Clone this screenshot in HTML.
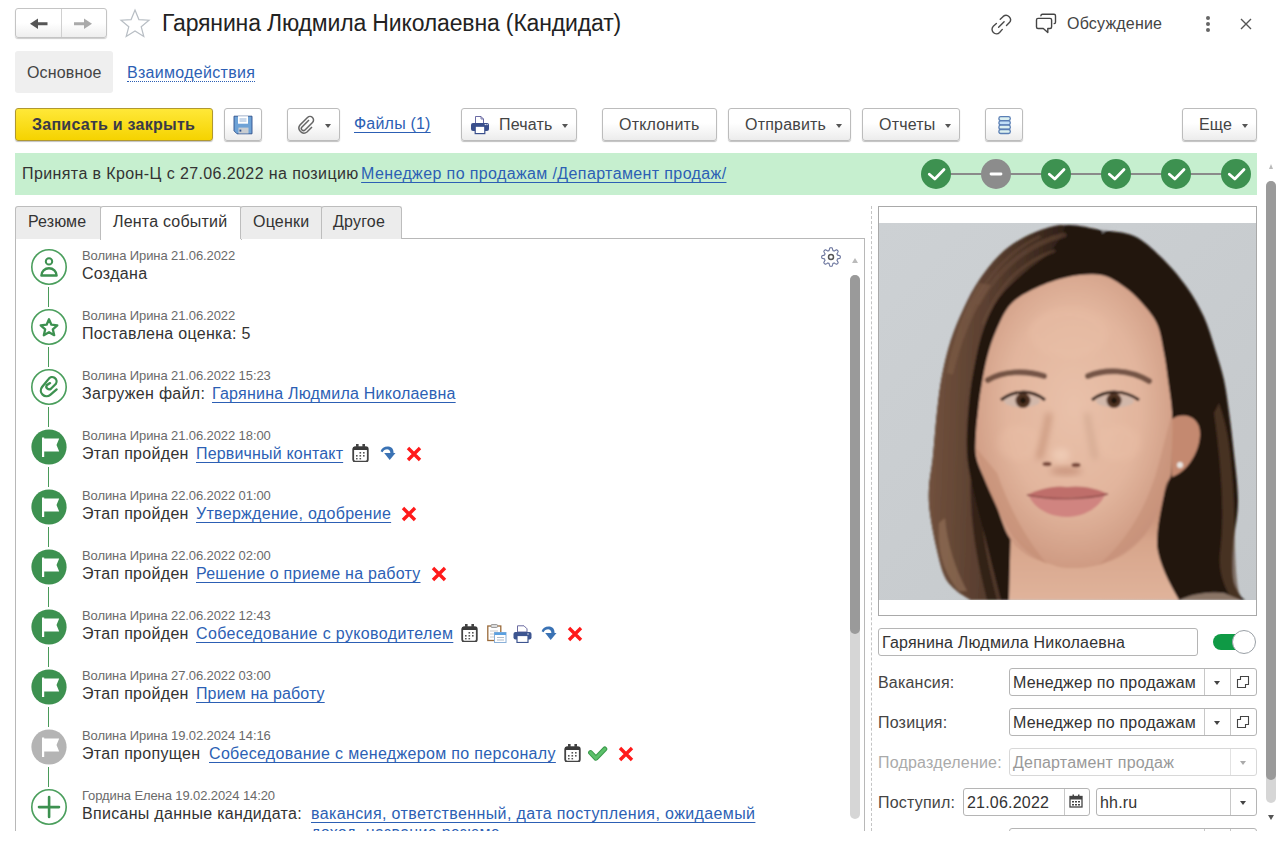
<!DOCTYPE html>
<html><head><meta charset="utf-8">
<style>
html,body{margin:0;padding:0}
body{width:1280px;height:842px;overflow:hidden;background:#fff;font-family:"Liberation Sans",sans-serif;color:#333;position:relative}
.a{position:absolute;white-space:nowrap;line-height:1}
.t16{font-size:16px;letter-spacing:0.2px}
.btn{position:absolute;top:108px;height:31px;border:1px solid #bcbcbc;border-radius:3px;background:linear-gradient(#fff 0%,#fff 45%,#ececec 100%);box-shadow:0 1px 1px rgba(0,0,0,.25);box-sizing:content-box}
.btxt{position:absolute;top:116.5px;font-size:16px;line-height:1;color:#444;white-space:nowrap;letter-spacing:0.2px}
.dd{position:absolute;width:0;height:0;border-left:3.5px solid transparent;border-right:3.5px solid transparent;border-top:4px solid #555}
.small{font-size:13px;color:#6a6a6a;letter-spacing:-0.1px}
.main{font-size:16px;color:#333;letter-spacing:0.3px}
.vline{position:absolute;left:47.7px;width:1.4px;background:#4a9a5a}
.lnk,.main.lnk{color:#2c5fb4;text-decoration:underline;text-underline-offset:3px;text-decoration-skip-ink:none}
.fld{position:absolute;height:26px;border:1px solid #b5b5b5;border-radius:3px;background:#fff;box-sizing:content-box}
</style></head><body>

<!-- header nav -->
<div class="a" style="left:15px;top:8px;width:90px;height:28px;border:1px solid #c4c4c4;border-radius:3px;background:linear-gradient(#fff 50%,#eee);box-shadow:0 1px 1px rgba(0,0,0,.2)"></div>
<div class="a" style="left:61px;top:9px;width:1px;height:28px;background:#d0d0d0"></div>
<svg class="a" style="left:28px;top:14px" width="22" height="18" viewBox="0 0 22 18"><path d="M8 9.75h11.5" stroke="#555" stroke-width="3"/><path d="M2 9.75L10 4.5V15z" fill="#555"/></svg>
<svg class="a" style="left:72px;top:14px" width="22" height="18" viewBox="0 0 22 18"><path d="M2 9.75h11.5" stroke="#aaa" stroke-width="3"/><path d="M20 9.75L12 4.5V15z" fill="#aaa"/></svg>
<svg class="a" style="left:119px;top:8px" width="32" height="30" viewBox="0 0 32 30"><path d="M16 2l3.9 9.6 10.1.6-7.8 6.5 2.6 9.8L16 23l-8.8 5.5 2.6-9.8L2 12.2l10.1-.6z" fill="none" stroke="#b8bec4" stroke-width="1.2"/></svg>
<div class="a" style="left:162px;top:12px;font-size:23px;color:#222;letter-spacing:-0.15px">Гарянина Людмила Николаевна (Кандидат)</div>

<!-- header right -->
<svg class="a" style="left:990px;top:13px" width="24" height="22" viewBox="0 0 24 22"><g fill="none" stroke="#4a4a4a" stroke-width="1.4" stroke-linecap="round"><path d="M10.25 6.28L13.2 3.4A4.4 4.4 0 0 1 19.4 9.6L16.5 12.5"/><path d="M6.4 10.4L3.3 13.2A4.4 4.4 0 0 0 9.6 19.4L12.3 16.4"/><path d="M8.6 14.2L14.1 8.7"/></g></svg>
<svg class="a" style="left:1034px;top:12px" width="24" height="24" viewBox="0 0 24 24"><g fill="none" stroke="#444" stroke-width="1.4" stroke-linejoin="round" stroke-linecap="round"><path d="M6.9 3.8Q7 2.2 8.5 2.2H20Q21.5 2.2 21.5 3.7V10.3Q21.5 11.5 20.2 11.6"/><path d="M2.5 7.9Q2.5 6.4 4 6.4H16Q17.6 6.4 17.6 8V15Q17.6 16.5 16 16.5H13.8V20.6L9.3 16.5H4Q2.5 16.5 2.5 15Z"/></g></svg>
<div class="a t16" style="left:1067px;top:16px;color:#444">Обсуждение</div>
<div class="a" style="left:1206px;top:16px;width:4px;height:4px;border-radius:2px;background:#666"></div>
<div class="a" style="left:1206px;top:22px;width:4px;height:4px;border-radius:2px;background:#666"></div>
<div class="a" style="left:1206px;top:28px;width:4px;height:4px;border-radius:2px;background:#666"></div>
<svg class="a" style="left:1240px;top:18px" width="12" height="12" viewBox="0 0 12 12"><path d="M1 1l10 10M11 1L1 11" stroke="#555" stroke-width="1.4"/></svg>

<!-- section tabs -->
<div class="a" style="left:15px;top:51px;width:98px;height:42px;background:#efefef;border-radius:3px"></div>
<div class="a t16" style="left:27px;top:64.5px;color:#444;letter-spacing:0.15px">Основное</div>
<div class="a t16" style="left:127px;top:64.5px;color:#2c5fb4;border-bottom:1px dotted #2c5fb4;padding-bottom:0px;letter-spacing:0.3px">Взаимодействия</div>

<!-- toolbar -->
<div class="a" style="left:15px;top:108px;width:196px;height:31px;border:1px solid #b09830;border-radius:3px;background:linear-gradient(#ffe838,#f5d300);box-shadow:0 1px 1px rgba(0,0,0,.25)"></div>
<div class="a" style="left:32px;top:116.5px;font-size:16px;font-weight:bold;color:#3a3a48;letter-spacing:0.25px">Записать и закрыть</div>

<div class="btn" style="left:224px;width:36px"></div>
<svg class="a" style="left:233px;top:115px" width="20" height="20" viewBox="0 0 20 20"><path d="M1 1.2H19V18.8H4L1 15.8Z" fill="#6ea2d6" stroke="#2d4f8a" stroke-width="0.9"/><rect x="5" y="1.2" width="10" height="7.5" fill="#fff"/><path d="M6.5 4h7M6.5 6h7" stroke="#7aa0cc" stroke-width="0.8"/><rect x="5.5" y="12.6" width="10" height="5.8" fill="#c9cdd1"/><rect x="6.5" y="14.6" width="1.8" height="2" fill="#2d4f8a"/></svg>

<div class="btn" style="left:287px;width:51px"></div>
<svg class="a" style="left:296px;top:115px" width="20" height="20" viewBox="0 0 20 20"><path d="M13 5l-7 7a2 2 0 0 0 3 3l7.5-7.5a3.5 3.5 0 0 0-5-5L4 10a5 5 0 0 0 7 7l5-5" fill="none" stroke="#666" stroke-width="1.5"/></svg>
<div class="dd" style="left:325px;top:124px"></div>

<div class="a t16 lnk" style="left:354px;top:116px">Файлы (1)</div>

<div class="btn" style="left:461px;width:114px"></div>
<svg class="a" style="left:469px;top:114px" width="22" height="22" viewBox="0 0 22 22"><path d="M6.5 2.5H12L14.5 5V10H6.5Z" fill="#fff" stroke="#5a5a9a" stroke-width="0.9"/><path d="M12 2.5V5H14.5" fill="none" stroke="#5a5a9a" stroke-width="0.8"/><rect x="2" y="9" width="18" height="8" rx="2" fill="#3a4f8c"/><rect x="6.2" y="12.2" width="9.6" height="7.4" fill="#fff" stroke="#3a4f8c" stroke-width="1.2"/><circle cx="16.3" cy="10.6" r="0.7" fill="#fff"/><circle cx="18.1" cy="10.6" r="0.7" fill="#fff"/></svg>
<div class="btxt" style="left:499px">Печать</div>
<div class="dd" style="left:562px;top:124px"></div>

<div class="btn" style="left:602px;width:113px"></div>
<div class="btxt" style="left:619px">Отклонить</div>

<div class="btn" style="left:728px;width:121px"></div>
<div class="btxt" style="left:745px">Отправить</div>
<div class="dd" style="left:836px;top:124px"></div>

<div class="btn" style="left:862px;width:96px"></div>
<div class="btxt" style="left:879px">Отчеты</div>
<div class="dd" style="left:945px;top:124px"></div>

<div class="btn" style="left:985px;width:36px"></div>
<svg class="a" style="left:997px;top:114px" width="16" height="22" viewBox="0 0 16 22"><g stroke="#5a7fb5" stroke-width="1.3"><rect x="1.9" y="2.6" width="11.4" height="4" rx="1.8" fill="#dcf0f0"/><rect x="1.9" y="6.9" width="11.4" height="4" rx="1.8" fill="#c2e0f8"/><rect x="1.9" y="11.2" width="11.4" height="4" rx="1.8" fill="#dcf0f0"/><rect x="1.9" y="15.5" width="11.4" height="4" rx="1.8" fill="#dcf0f0"/></g></svg>

<div class="btn" style="left:1182px;width:73px"></div>
<div class="btxt" style="left:1199px">Еще</div>
<div class="dd" style="left:1242px;top:124px"></div>

<!-- banner -->
<div class="a" style="left:15px;top:153px;width:1242px;height:42px;background:#c6efcf"></div>
<div class="a t16" style="left:22px;top:165.5px;color:#333;letter-spacing:0.4px">Принята в Крон-Ц с 27.06.2022 на позицию <span class="lnk" style="margin-left:-2.5px;letter-spacing:0.38px">Менеджер по продажам /Департамент продаж/</span></div>
<div class="a" style="left:936px;top:173px;width:300px;height:2px;background:#8a8a8a"></div>
<svg class="a" style="left:919px;top:157px" width="340" height="34" viewBox="0 0 340 34">
<g fill="#3d9150"><circle cx="17" cy="17" r="15"/><circle cx="137" cy="17" r="15"/><circle cx="197" cy="17" r="15"/><circle cx="257" cy="17" r="15"/><circle cx="317" cy="17" r="15"/></g>
<circle cx="77" cy="17" r="15" fill="#8c8c8c"/>
<g fill="none" stroke="#fff" stroke-width="2.8" stroke-linecap="round" stroke-linejoin="round"><path d="M10.3 17.2L15.8 22L25 12.5"/><path d="M130.3 17.2L135.8 22L145 12.5"/><path d="M190.3 17.2L195.8 22L205 12.5"/><path d="M250.3 17.2L255.8 22L265 12.5"/><path d="M310.3 17.2L315.8 22L325 12.5"/><path d="M72 17h10"/></g>
</svg>

<!-- page scrollbar -->
<div class="a" style="left:1266px;top:181px;width:10px;height:622px;border-radius:5px;background:#d6d6d6"></div>
<div class="a" style="left:1266px;top:181px;width:10px;height:599px;border-radius:5px;background:#9a9a9a"></div>
<div class="a" style="left:1268.5px;top:164px;width:0;height:0;border-left:2.5px solid transparent;border-right:2.5px solid transparent;border-bottom:5px solid #bbb"></div>
<div class="a" style="left:1268px;top:815px;width:0;height:0;border-left:3px solid transparent;border-right:3px solid transparent;border-top:5px solid #555"></div>

<!-- tabs -->
<div class="a" style="left:15px;top:238px;width:848px;height:600px;border-left:1px solid #b8b8b8;border-top:1px solid #b8b8b8;border-right:1px solid #b8b8b8"></div>
<div class="a" style="left:15px;top:206px;width:85px;height:32px;background:#ececec;border:1px solid #bdbdbd;border-bottom:none;border-radius:3px 3px 0 0"></div>
<div class="a" style="left:100px;top:206px;width:140px;height:33px;background:#fff;border:1px solid #bdbdbd;border-bottom:none;border-radius:3px 3px 0 0"></div>
<div class="a" style="left:240px;top:206px;width:81px;height:32px;background:#ececec;border:1px solid #bdbdbd;border-bottom:none;border-radius:3px 3px 0 0"></div>
<div class="a" style="left:321px;top:206px;width:79px;height:32px;background:#ececec;border:1px solid #bdbdbd;border-bottom:none;border-radius:3px 3px 0 0"></div>
<div class="a t16" style="left:28px;top:213.5px;color:#333;letter-spacing:0.1px">Резюме</div>
<div class="a t16" style="left:113px;top:213.5px;color:#333">Лента событий</div>
<div class="a t16" style="left:253px;top:213.5px;color:#333">Оценки</div>
<div class="a t16" style="left:333px;top:213.5px;color:#333">Другое</div>

<!-- gear + left scrollbar -->
<svg class="a" style="left:820px;top:246px" width="22" height="22" viewBox="0 0 22 22"><path d="M20.30 11.00 L20.29 11.32 L20.28 11.65 L20.17 11.96 L19.71 12.22 L19.19 12.44 L18.64 12.62 L18.10 12.77 L17.61 12.90 L17.37 13.07 L17.30 13.29 L17.21 13.51 L17.12 13.73 L17.02 13.94 L16.92 14.15 L17.14 14.54 L17.41 15.01 L17.68 15.51 L17.93 16.03 L18.11 16.55 L18.12 16.98 L17.91 17.22 L17.69 17.46 L17.46 17.69 L17.22 17.91 L16.98 18.12 L16.55 18.11 L16.03 17.93 L15.51 17.68 L15.01 17.41 L14.55 17.14 L14.15 16.92 L13.94 17.02 L13.73 17.12 L13.51 17.21 L13.29 17.30 L13.07 17.37 L12.90 17.61 L12.77 18.10 L12.62 18.64 L12.44 19.19 L12.22 19.71 L11.96 20.17 L11.65 20.28 L11.32 20.29 L11.00 20.30 L10.68 20.29 L10.35 20.28 L10.04 20.17 L9.78 19.71 L9.56 19.19 L9.38 18.64 L9.23 18.10 L9.10 17.61 L8.93 17.37 L8.71 17.30 L8.49 17.21 L8.27 17.12 L8.06 17.02 L7.85 16.92 L7.46 17.14 L6.99 17.41 L6.49 17.68 L5.97 17.93 L5.45 18.11 L5.02 18.12 L4.78 17.91 L4.54 17.69 L4.31 17.46 L4.09 17.22 L3.88 16.98 L3.89 16.55 L4.07 16.03 L4.32 15.51 L4.59 15.01 L4.86 14.54 L5.08 14.15 L4.98 13.94 L4.88 13.73 L4.79 13.51 L4.70 13.29 L4.63 13.07 L4.39 12.90 L3.90 12.77 L3.36 12.62 L2.81 12.44 L2.29 12.22 L1.83 11.96 L1.72 11.65 L1.71 11.32 L1.70 11.00 L1.71 10.68 L1.72 10.35 L1.83 10.04 L2.29 9.78 L2.81 9.56 L3.36 9.38 L3.90 9.23 L4.39 9.10 L4.63 8.93 L4.70 8.71 L4.79 8.49 L4.88 8.27 L4.98 8.06 L5.08 7.85 L4.86 7.45 L4.59 6.99 L4.32 6.49 L4.07 5.97 L3.89 5.45 L3.88 5.02 L4.09 4.78 L4.31 4.54 L4.54 4.31 L4.78 4.09 L5.02 3.88 L5.45 3.89 L5.97 4.07 L6.49 4.32 L6.99 4.59 L7.45 4.86 L7.85 5.08 L8.06 4.98 L8.27 4.88 L8.49 4.79 L8.71 4.70 L8.93 4.63 L9.10 4.39 L9.23 3.90 L9.38 3.36 L9.56 2.81 L9.78 2.29 L10.04 1.83 L10.35 1.72 L10.68 1.71 L11.00 1.70 L11.32 1.71 L11.65 1.72 L11.96 1.83 L12.22 2.29 L12.44 2.81 L12.62 3.36 L12.77 3.90 L12.90 4.39 L13.07 4.63 L13.29 4.70 L13.51 4.79 L13.73 4.88 L13.94 4.98 L14.15 5.08 L14.55 4.86 L15.01 4.59 L15.51 4.32 L16.03 4.07 L16.55 3.89 L16.98 3.88 L17.22 4.09 L17.46 4.31 L17.69 4.54 L17.91 4.78 L18.12 5.02 L18.11 5.45 L17.93 5.97 L17.68 6.49 L17.41 6.99 L17.14 7.45 L16.92 7.85 L17.02 8.06 L17.12 8.27 L17.21 8.49 L17.30 8.71 L17.37 8.93 L17.61 9.10 L18.10 9.23 L18.64 9.38 L19.19 9.56 L19.71 9.78 L20.17 10.04 L20.28 10.35 L20.29 10.68Z" fill="none" stroke="#66709a" stroke-width="1.1" stroke-linejoin="round"/><circle cx="11" cy="11" r="2.5" fill="none" stroke="#555" stroke-width="1.5"/></svg>
<div class="a" style="left:852px;top:258px;width:0;height:0;border-left:3px solid transparent;border-right:3px solid transparent;border-bottom:5px solid #bbb"></div>
<div class="a" style="left:850px;top:275px;width:10px;height:544px;border-radius:5px;background:#d6d6d6"></div>
<div class="a" style="left:850px;top:275px;width:10px;height:359px;border-radius:5px;background:#9a9a9a"></div>

<!-- dashed splitter -->
<div class="a" style="left:871px;top:206px;width:0;height:625px;border-left:1px dashed #c4c4c4"></div>

<!-- TIMELINE -->
<div class="vline" style="top:287px;height:20px"></div>
<svg class="a" style="left:30px;top:248px" width="38" height="38" viewBox="0 0 38 38"><circle cx="19" cy="19" r="17.2" fill="none" stroke="#4a9e5c" stroke-width="1.6"/><circle cx="19" cy="13.4" r="3.2" fill="none" stroke="#3d9150" stroke-width="2"/><path d="M11.4 27.5a7.6 7.3 0 0 1 15.2 0z" fill="none" stroke="#3d9150" stroke-width="2.4" stroke-linejoin="round"/></svg>
<div class="a small" style="left:82px;top:248.5px">Волина Ирина 21.06.2022</div>
<div class="a main" style="left:82px;top:265.5px">Создана</div>
<div class="vline" style="top:347px;height:20px"></div>
<svg class="a" style="left:30px;top:308px" width="38" height="38" viewBox="0 0 38 38"><circle cx="19" cy="19" r="17.2" fill="none" stroke="#4a9e5c" stroke-width="1.6"/><path d="M19 11.2l2.4 5.5 5.9.6-4.5 4 1.4 5.9L19 24.2l-5.2 3 1.4-5.9-4.5-4 5.9-.6z" fill="none" stroke="#3d9150" stroke-width="2.3" stroke-linejoin="round"/></svg>
<div class="a small" style="left:82px;top:308.5px">Волина Ирина 21.06.2022</div>
<div class="a main" style="left:82px;top:325.5px">Поставлена оценка: 5</div>
<div class="vline" style="top:407px;height:20px"></div>
<svg class="a" style="left:30px;top:368px" width="38" height="38" viewBox="0 0 38 38"><circle cx="19" cy="19" r="17.2" fill="none" stroke="#4a9e5c" stroke-width="1.6"/><path d="M26.65 21.45L20.25 26.8A5.7 5.7 0 0 1 12.05 18.96L18.46 11.12A3.9 3.9 0 0 1 25.9 15.75L20.96 20.74A2.85 2.85 0 0 1 16.68 17.18L20.07 15.1" fill="none" stroke="#3d9150" stroke-width="2.3" stroke-linecap="round"/></svg>
<div class="a small" style="left:82px;top:368.5px">Волина Ирина 21.06.2022 15:23</div>
<div class="a main" style="left:82px;top:385.5px">Загружен файл:</div>
<div class="a main lnk" style="left:212px;top:385.5px;letter-spacing:0.22px">Гарянина Людмила Николаевна</div>
<div class="vline" style="top:467px;height:20px"></div>
<svg class="a" style="left:31px;top:429px" width="36" height="36" viewBox="0 0 36 36"><circle cx="18" cy="18" r="17.6" fill="#3d9150"/><path d="M11 8.6h2.2v1h15l-2.7 6.5 2.7 6.5H13.2V28h-2.2z" fill="#fff"/></svg>
<div class="a small" style="left:82px;top:428.5px">Волина Ирина 21.06.2022 18:00</div>
<div class="a main" style="left:82px;top:445.5px">Этап пройден</div>
<div class="a main lnk" style="left:196px;top:445.5px;letter-spacing:0.17px">Первичный контакт</div>
<svg class="a" style="left:352px;top:443px" width="17" height="19" viewBox="0 0 17 19"><rect x="1.2" y="4.2" width="14.6" height="14.4" rx="2" fill="#fff" stroke="#444" stroke-width="1.8"/><rect x="1" y="4" width="15" height="3" fill="#3a3a3a"/><rect x="4" y="1" width="2.6" height="3.2" fill="#444"/><rect x="10.4" y="1" width="2.6" height="3.2" fill="#444"/><g fill="#555"><rect x="4" y="12" width="1.6" height="1.6"/><rect x="7.5" y="9" width="1.6" height="1.6"/><rect x="7.5" y="12" width="1.6" height="1.6"/><rect x="7.5" y="15" width="1.6" height="1.4"/><rect x="11" y="9" width="1.6" height="1.6"/><rect x="11" y="12" width="1.6" height="1.6"/><rect x="4" y="15" width="1.6" height="1.4"/></g></svg>
<svg class="a" style="left:380px;top:446px" width="17" height="15" viewBox="0 0 17 15"><path d="M0.6 5.2C1.5 2 5 0.2 8.5 0.6C12 1 13.6 3.5 13.6 7.2L10.4 7.2C10.3 5 9.5 3.6 7.8 3.4C5.5 3.1 3.5 4.5 2.6 6.2Z" fill="#3a72b4"/><path d="M4.2 6.9h11.3l-5.8 7z" fill="#3a72b4"/></svg>
<svg class="a" style="left:406px;top:446px" width="16" height="16" viewBox="0 0 16 16"><path d="M2 2l12 12M14 2L2 14" stroke="#ff1a1a" stroke-width="3.4"/></svg>
<div class="vline" style="top:527px;height:20px"></div>
<svg class="a" style="left:31px;top:489px" width="36" height="36" viewBox="0 0 36 36"><circle cx="18" cy="18" r="17.6" fill="#3d9150"/><path d="M11 8.6h2.2v1h15l-2.7 6.5 2.7 6.5H13.2V28h-2.2z" fill="#fff"/></svg>
<div class="a small" style="left:82px;top:488.5px">Волина Ирина 22.06.2022 01:00</div>
<div class="a main" style="left:82px;top:505.5px">Этап пройден</div>
<div class="a main lnk" style="left:196px;top:505.5px;letter-spacing:0.3px">Утверждение, одобрение</div>
<svg class="a" style="left:401px;top:506px" width="16" height="16" viewBox="0 0 16 16"><path d="M2 2l12 12M14 2L2 14" stroke="#ff1a1a" stroke-width="3.4"/></svg>
<div class="vline" style="top:587px;height:20px"></div>
<svg class="a" style="left:31px;top:549px" width="36" height="36" viewBox="0 0 36 36"><circle cx="18" cy="18" r="17.6" fill="#3d9150"/><path d="M11 8.6h2.2v1h15l-2.7 6.5 2.7 6.5H13.2V28h-2.2z" fill="#fff"/></svg>
<div class="a small" style="left:82px;top:548.5px">Волина Ирина 22.06.2022 02:00</div>
<div class="a main" style="left:82px;top:565.5px">Этап пройден</div>
<div class="a main lnk" style="left:196px;top:565.5px;letter-spacing:0.25px">Решение о приеме на работу</div>
<svg class="a" style="left:431px;top:566px" width="16" height="16" viewBox="0 0 16 16"><path d="M2 2l12 12M14 2L2 14" stroke="#ff1a1a" stroke-width="3.4"/></svg>
<div class="vline" style="top:647px;height:20px"></div>
<svg class="a" style="left:31px;top:609px" width="36" height="36" viewBox="0 0 36 36"><circle cx="18" cy="18" r="17.6" fill="#3d9150"/><path d="M11 8.6h2.2v1h15l-2.7 6.5 2.7 6.5H13.2V28h-2.2z" fill="#fff"/></svg>
<div class="a small" style="left:82px;top:608.5px">Волина Ирина 22.06.2022 12:43</div>
<div class="a main" style="left:82px;top:625.5px">Этап пройден</div>
<div class="a main lnk" style="left:196px;top:625.5px;letter-spacing:0.37px">Собеседование с руководителем</div>
<svg class="a" style="left:461px;top:623px" width="17" height="19" viewBox="0 0 17 19"><rect x="1.2" y="4.2" width="14.6" height="14.4" rx="2" fill="#fff" stroke="#444" stroke-width="1.8"/><rect x="1" y="4" width="15" height="3" fill="#3a3a3a"/><rect x="4" y="1" width="2.6" height="3.2" fill="#444"/><rect x="10.4" y="1" width="2.6" height="3.2" fill="#444"/><g fill="#555"><rect x="4" y="12" width="1.6" height="1.6"/><rect x="7.5" y="9" width="1.6" height="1.6"/><rect x="7.5" y="12" width="1.6" height="1.6"/><rect x="7.5" y="15" width="1.6" height="1.4"/><rect x="11" y="9" width="1.6" height="1.6"/><rect x="11" y="12" width="1.6" height="1.6"/><rect x="4" y="15" width="1.6" height="1.4"/></g></svg>
<svg class="a" style="left:487px;top:624px" width="20" height="19" viewBox="0 0 20 19"><rect x="0.8" y="2" width="13" height="14.5" fill="#fff" stroke="#9a6a3a" stroke-width="1.3"/><rect x="4" y="0.5" width="6.5" height="3" rx="1" fill="#ddd" stroke="#888" stroke-width="0.8"/><path d="M3 7h8M3 10h8M3 13h5" stroke="#bbb" stroke-width="0.8"/><rect x="7.5" y="8.5" width="11.5" height="10" fill="#fff" stroke="#8ab0d8" stroke-width="1"/><rect x="7.5" y="8.5" width="11.5" height="2.5" fill="#5aa0e0"/><path d="M10 13.5h7M10 16h7" stroke="#9ab" stroke-width="0.8"/></svg>
<svg class="a" style="left:513px;top:625px" width="19" height="18" viewBox="0 0 19 18"><path d="M4.5 0.8h6.5l3 3V7h-9.5z" fill="#fff" stroke="#6a6aa0" stroke-width="1"/><rect x="0.5" y="7" width="18" height="7.5" rx="2" fill="#3d5590"/><rect x="4" y="10.5" width="11" height="7" fill="#fff" stroke="#3d5590" stroke-width="1.2"/><circle cx="15" cy="9" r="0.7" fill="#fff"/></svg>
<svg class="a" style="left:541px;top:626px" width="17" height="15" viewBox="0 0 17 15"><path d="M0.6 5.2C1.5 2 5 0.2 8.5 0.6C12 1 13.6 3.5 13.6 7.2L10.4 7.2C10.3 5 9.5 3.6 7.8 3.4C5.5 3.1 3.5 4.5 2.6 6.2Z" fill="#3a72b4"/><path d="M4.2 6.9h11.3l-5.8 7z" fill="#3a72b4"/></svg>
<svg class="a" style="left:567px;top:626px" width="16" height="16" viewBox="0 0 16 16"><path d="M2 2l12 12M14 2L2 14" stroke="#ff1a1a" stroke-width="3.4"/></svg>
<div class="vline" style="top:707px;height:20px"></div>
<svg class="a" style="left:31px;top:669px" width="36" height="36" viewBox="0 0 36 36"><circle cx="18" cy="18" r="17.6" fill="#3d9150"/><path d="M11 8.6h2.2v1h15l-2.7 6.5 2.7 6.5H13.2V28h-2.2z" fill="#fff"/></svg>
<div class="a small" style="left:82px;top:668.5px">Волина Ирина 27.06.2022 03:00</div>
<div class="a main" style="left:82px;top:685.5px">Этап пройден</div>
<div class="a main lnk" style="left:196px;top:685.5px;letter-spacing:0.12px">Прием на работу</div>
<div class="vline" style="top:767px;height:20px"></div>
<svg class="a" style="left:31px;top:729px" width="36" height="36" viewBox="0 0 36 36"><circle cx="18" cy="18" r="17.6" fill="#b4b4b4"/><path d="M11 8.6h2.2v1h15l-2.7 6.5 2.7 6.5H13.2V28h-2.2z" fill="#fff"/></svg>
<div class="a small" style="left:82px;top:728.5px">Волина Ирина 19.02.2024 14:16</div>
<div class="a main" style="left:82px;top:745.5px">Этап пропущен</div>
<div class="a main lnk" style="left:209px;top:745.5px;letter-spacing:0.33px">Собеседование с менеджером по персоналу</div>
<svg class="a" style="left:564px;top:743px" width="17" height="19" viewBox="0 0 17 19"><rect x="1.2" y="4.2" width="14.6" height="14.4" rx="2" fill="#fff" stroke="#444" stroke-width="1.8"/><rect x="1" y="4" width="15" height="3" fill="#3a3a3a"/><rect x="4" y="1" width="2.6" height="3.2" fill="#444"/><rect x="10.4" y="1" width="2.6" height="3.2" fill="#444"/><g fill="#555"><rect x="4" y="12" width="1.6" height="1.6"/><rect x="7.5" y="9" width="1.6" height="1.6"/><rect x="7.5" y="12" width="1.6" height="1.6"/><rect x="7.5" y="15" width="1.6" height="1.4"/><rect x="11" y="9" width="1.6" height="1.6"/><rect x="11" y="12" width="1.6" height="1.6"/><rect x="4" y="15" width="1.6" height="1.4"/></g></svg>
<svg class="a" style="left:588px;top:746px" width="20" height="16" viewBox="0 0 20 16"><path d="M2.6 6.6l5.3 5.6L16.8 3" fill="none" stroke="#3a9a4a" stroke-width="5" stroke-linejoin="round" stroke-linecap="round"/><path d="M2.6 6.6l5.3 5.6L16.8 3" fill="none" stroke="#5cc06a" stroke-width="3" stroke-linejoin="round" stroke-linecap="round"/></svg>
<svg class="a" style="left:618px;top:746px" width="16" height="16" viewBox="0 0 16 16"><path d="M2 2l12 12M14 2L2 14" stroke="#ff1a1a" stroke-width="3.4"/></svg>
<svg class="a" style="left:30px;top:788px" width="38" height="38" viewBox="0 0 38 38"><circle cx="19" cy="19" r="17.2" fill="none" stroke="#4a9e5c" stroke-width="1.6"/><path d="M19.1 9v20M9 19.1h20" stroke="#3d9150" stroke-width="2.6" stroke-linecap="round"/></svg>
<div class="a small" style="left:82px;top:788.5px">Гордина Елена 19.02.2024 14:20</div>
<div class="a main" style="left:82px;top:805.5px">Вписаны данные кандидата:</div>
<div class="a main lnk" style="left:311px;top:805.5px;letter-spacing:0.38px">вакансия, ответственный, дата поступления, ожидаемый</div>
<div class="a main lnk" style="left:311px;top:824.5px">доход, название резюме</div>

<!-- RIGHT PANEL -->
<div class="a" style="left:878px;top:206px;width:377px;height:408px;border:1px solid #a9a9a9;background:#fff"></div>
<div id="photo" class="a" style="left:879px;top:223px;width:377px;height:377px;background:#c6cacd;overflow:hidden"><svg width="377" height="377" viewBox="0 0 377 377" style="position:absolute;left:0;top:0">
<defs>
<filter id="bl" x="-10%" y="-10%" width="120%" height="120%"><feGaussianBlur stdDeviation="1.1"/></filter>
<filter id="bl3" x="-30%" y="-30%" width="160%" height="160%"><feGaussianBlur stdDeviation="3"/></filter>
<radialGradient id="skin" cx="0.5" cy="0.45" r="0.62"><stop offset="0" stop-color="#e9c1aa"/><stop offset="0.55" stop-color="#e2b59d"/><stop offset="1" stop-color="#c8927a"/></radialGradient>
<linearGradient id="neck" x1="0" y1="0" x2="0" y2="1"><stop offset="0" stop-color="#b98068"/><stop offset="0.45" stop-color="#d7a58b"/><stop offset="1" stop-color="#e0b39b"/></linearGradient>
<linearGradient id="bg" x1="0" y1="0" x2="1" y2="1"><stop offset="0" stop-color="#cdd1d4"/><stop offset="1" stop-color="#c4c8cb"/></linearGradient>
<linearGradient id="lh" x1="0" y1="0" x2="1" y2="0.1"><stop offset="0" stop-color="#75543f"/><stop offset="0.45" stop-color="#5a3f30"/><stop offset="0.8" stop-color="#3f2b20"/><stop offset="1" stop-color="#2e1f17"/></linearGradient>
</defs>
<rect width="377" height="377" fill="url(#bg)"/>
<g filter="url(#bl)">
<path d="M92.0 377.0 C89.7 375.5 82.3 371.8 78.0 368.0 C73.7 364.2 69.3 360.8 66.0 354.0 C62.7 347.2 60.5 337.7 58.0 327.0 C55.5 316.3 52.3 300.3 51.0 290.0 C49.7 279.7 49.5 274.5 50.0 265.0 C50.5 255.5 52.7 245.7 54.0 233.0 C55.3 220.3 56.5 202.3 58.0 189.0 C59.5 175.7 60.7 165.0 63.0 153.0 C65.3 141.0 68.3 128.3 72.0 117.0 C75.7 105.7 80.2 95.2 85.0 85.0 C89.8 74.8 94.2 65.7 101.0 56.0 C107.8 46.3 116.7 34.8 126.0 27.0 C135.3 19.2 146.5 13.2 157.0 9.0 C167.5 4.8 178.2 2.3 189.0 2.0 C199.8 1.7 211.0 5.2 222.0 7.0 C233.0 8.8 245.0 8.5 255.0 13.0 C265.0 17.5 273.3 25.7 282.0 34.0 C290.7 42.3 299.8 53.0 307.0 63.0 C314.2 73.0 320.2 83.5 325.0 94.0 C329.8 104.5 332.7 115.5 336.0 126.0 C339.3 136.5 342.7 146.5 345.0 157.0 C347.3 167.5 348.5 178.2 350.0 189.0 C351.5 199.8 352.5 207.2 354.0 222.0 C355.5 236.8 359.0 261.2 359.0 278.0 C359.0 294.8 354.8 310.0 354.0 323.0 C353.2 336.0 352.8 347.8 354.0 356.0 C355.2 364.2 359.0 368.5 361.0 372.0 C363.0 375.5 365.2 376.2 366.0 377.0Z" fill="#211610"/>
<path d="M92.0 377.0 C89.7 375.5 82.3 371.8 78.0 368.0 C73.7 364.2 69.3 360.8 66.0 354.0 C62.7 347.2 60.5 337.7 58.0 327.0 C55.5 316.3 52.3 300.3 51.0 290.0 C49.7 279.7 49.5 274.5 50.0 265.0 C50.5 255.5 52.7 245.7 54.0 233.0 C55.3 220.3 56.5 202.3 58.0 189.0 C59.5 175.7 60.7 165.0 63.0 153.0 C65.3 141.0 68.3 128.3 72.0 117.0 C75.7 105.7 80.2 95.2 85.0 85.0 C89.8 74.8 94.2 65.7 101.0 56.0 C107.8 46.3 116.7 34.8 126.0 27.0 C135.3 19.2 147.2 13.0 157.0 9.0 C166.8 5.0 182.5 -0.2 185.0 3.0 C187.5 6.2 178.7 20.2 172.0 28.0 C165.3 35.8 153.7 42.2 145.0 50.0 C136.3 57.8 126.7 65.8 120.0 75.0 C113.3 84.2 109.0 94.2 105.0 105.0 C101.0 115.8 98.5 127.5 96.0 140.0 C93.5 152.5 91.3 165.0 90.0 180.0 C88.7 195.0 87.2 215.0 88.0 230.0 C88.8 245.0 92.2 256.7 95.0 270.0 C97.8 283.3 101.7 296.7 105.0 310.0 C108.3 323.3 112.2 338.8 115.0 350.0 C117.8 361.2 120.8 372.5 122.0 377.0Z" fill="url(#lh)"/>
<path d="M60 300 C58 330 66 352 80 368 L88 368 C76 345 68 320 66 295 Z" fill="#9a785f" opacity="0.55"/><g fill="none" stroke="#6a4c3a" stroke-linecap="round" opacity="0.55"><path d="M185 12 C150 20 120 45 100 80" stroke-width="5"/><path d="M175 28 C140 40 118 65 104 100" stroke-width="3"/><path d="M160 14 C130 28 105 55 88 95" stroke-width="3"/></g><path d="M218 2 C222 5 224 8 223 11 C226 8 230 5 236 4 Z" fill="#c6cacd" opacity="0.6"/>
<path d="M100 60 C85 85 74 115 68 150 L74 152 C82 118 94 88 112 62 Z" fill="#8a6650" opacity="0.4"/><path d="M92 250 C90 290 96 330 108 377 L118 377 C106 330 100 290 100 250 Z" fill="#24180f" opacity="0.7"/>
<path d="M335 190 C342 240 346 290 341 330 C339 350 346 365 353 377 L362 377 C353 350 358 300 353 250 C351 220 347 200 340 180 Z" fill="#5b4030" opacity="0.65"/>
<path d="M132 300 L130 377 L300 377 C290 360 280 340 278 323 C278 300 282 290 285 270 Z" fill="url(#neck)"/>
<path d="M300 377 C312 371 330 368 345 370 L362 377 Z" fill="#8a7466"/>
<path d="M293 196 C305 188 322 194 321 212 C320 232 306 250 293 254 Z" fill="#c4896f"/>
<path d="M189.0 54.0 C199.8 51.8 212.8 50.5 222.0 52.0 C231.2 53.5 237.3 58.5 244.0 63.0 C250.7 67.5 256.3 72.7 262.0 79.0 C267.7 85.3 274.2 92.5 278.0 101.0 C281.8 109.5 283.2 120.7 285.0 130.0 C286.8 139.3 287.7 147.2 289.0 157.0 C290.3 166.8 292.3 177.7 293.0 189.0 C293.7 200.3 293.2 214.7 293.0 225.0 C292.8 235.3 293.0 244.8 292.0 251.0 C291.0 257.2 288.7 256.8 287.0 262.0 C285.3 267.2 285.0 274.2 282.0 282.0 C279.0 289.8 275.3 300.7 269.0 309.0 C262.7 317.3 253.0 326.3 244.0 332.0 C235.0 337.7 224.3 340.8 215.0 343.0 C205.7 345.2 195.3 345.3 188.0 345.0 C180.7 344.7 177.7 343.2 171.0 341.0 C164.3 338.8 154.8 336.5 148.0 332.0 C141.2 327.5 135.2 322.3 130.0 314.0 C124.8 305.7 121.2 291.8 117.0 282.0 C112.8 272.2 108.3 263.2 105.0 255.0 C101.7 246.8 98.3 240.5 97.0 233.0 C95.7 225.5 96.7 217.3 97.0 210.0 C97.3 202.7 98.2 196.3 99.0 189.0 C99.8 181.7 100.5 175.0 102.0 166.0 C103.5 157.0 105.5 144.7 108.0 135.0 C110.5 125.3 113.0 117.0 117.0 108.0 C121.0 99.0 125.3 88.2 132.0 81.0 C138.7 73.8 147.5 69.5 157.0 65.0 C166.5 60.5 178.2 56.2 189.0 54.0Z" fill="url(#skin)"/>
<path d="M97 225 C103 255 115 280 125 298 C135 318 150 333 168 341 C150 320 132 290 118 250 Z" fill="#c18a70" opacity="0.5"/>
<path d="M293 190 L293 251 C288 262 284 275 280 286 C272 308 252 330 220 342 C250 315 270 280 280 240 Z" fill="#c18a70" opacity="0.45"/>
<g filter="url(#bl3)" opacity="0.25"><ellipse cx="140" cy="220" rx="22" ry="18" fill="#efc6ae"/><ellipse cx="240" cy="220" rx="22" ry="18" fill="#efc6ae"/><ellipse cx="190" cy="110" rx="40" ry="25" fill="#eec5ad"/></g>
<path d="M109 157 C124 148 146 147 165 153" fill="none" stroke="#5a3c30" stroke-width="6" stroke-linecap="round" opacity="0.8"/>
<path d="M209 153 C226 146 250 146 270 158" fill="none" stroke="#5a3c30" stroke-width="6" stroke-linecap="round" opacity="0.8"/>
<ellipse cx="143" cy="178" rx="18" ry="6.5" fill="#d2b8aa"/>
<ellipse cx="236" cy="178" rx="19" ry="6.5" fill="#d2b8aa"/>
<circle cx="144" cy="177.5" r="7.5" fill="#4e3222"/>
<circle cx="235" cy="177.5" r="7.5" fill="#4e3222"/>
<circle cx="144" cy="177.5" r="3" fill="#1e120c"/>
<circle cx="235" cy="177.5" r="3" fill="#1e120c"/>
<path d="M122 177 C134 167 152 166 166 177" fill="none" stroke="#2e1e18" stroke-width="3"/>
<path d="M213 177 C227 166 246 167 260 177" fill="none" stroke="#2e1e18" stroke-width="3"/>
<g filter="url(#bl3)" opacity="0.7"><path d="M170 190 C168 208 163 222 160 236" fill="none" stroke="#c08a70" stroke-width="6"/><path d="M208 190 C210 208 214 222 216 236" fill="none" stroke="#caa088" stroke-width="5"/></g>

<g filter="url(#bl3)" opacity="0.6"><ellipse cx="187" cy="248" rx="16" ry="4" fill="#b77e66"/></g><ellipse cx="182" cy="232" rx="9" ry="7" fill="#eecab4" filter="url(#bl3)"/>
<ellipse cx="168" cy="241" rx="4.5" ry="2.2" fill="#7a4a3a"/>
<ellipse cx="197" cy="242" rx="4.5" ry="2.2" fill="#7a4a3a"/>
<path d="M148 272 C160 266 175 262 188 264 C205 262 218 266 229 271 C218 276 200 274 188 275 C175 275 160 276 148 272 Z" fill="#bf6e6a"/>
<path d="M150 273 C165 277 180 276 188 276 C200 276 215 276 226 272 C220 285 205 294 188 294 C170 294 155 285 150 273 Z" fill="#d08480"/>
<path d="M148 272 C170 277 205 277 229 271" fill="none" stroke="#8e4a48" stroke-width="1.4"/>
<circle cx="301" cy="242" r="3" fill="#e8e4e0"/>
</g>
</svg></div>

<div class="fld" style="left:878px;top:628px;width:318px"></div>
<div class="a t16" style="left:882px;top:634.5px;color:#333">Гарянина Людмила Николаевна</div>
<div class="a" style="left:1213px;top:634px;width:40px;height:16px;border-radius:8px;background:#0f9a45"></div>
<div class="a" style="left:1232px;top:630px;width:22px;height:22px;border-radius:12px;background:#fff;border:1px solid #9aa0a6"></div>


<div class="a t16" style="left:878px;top:674.5px;color:#444">Вакансия:</div>
<div class="fld" style="left:1009px;top:668px;width:246px"></div>
<div class="a" style="left:1204px;top:669px;width:1px;height:26px;background:#c8c8c8"></div>
<div class="a" style="left:1230px;top:669px;width:1px;height:26px;background:#c8c8c8"></div>
<div class="a t16" style="left:1013px;top:674.5px;color:#333">Менеджер по продажам</div>
<div class="dd" style="left:1214px;top:681px;border-top-color:#444"></div>
<svg class="a" style="left:1236px;top:675px" width="14" height="14" viewBox="0 0 14 14"><path d="M4.5 1.5H12.5V9.5H9.5V12.5H1.5V4.5H4.5Z" fill="none" stroke="#444" stroke-width="1.1"/></svg>

<div class="a t16" style="left:878px;top:714.5px;color:#444">Позиция:</div>
<div class="fld" style="left:1009px;top:708px;width:246px"></div>
<div class="a" style="left:1204px;top:709px;width:1px;height:26px;background:#c8c8c8"></div>
<div class="a" style="left:1230px;top:709px;width:1px;height:26px;background:#c8c8c8"></div>
<div class="a t16" style="left:1013px;top:714.5px;color:#333">Менеджер по продажам</div>
<div class="dd" style="left:1214px;top:721px;border-top-color:#444"></div>
<svg class="a" style="left:1236px;top:715px" width="14" height="14" viewBox="0 0 14 14"><path d="M4.5 1.5H12.5V9.5H9.5V12.5H1.5V4.5H4.5Z" fill="none" stroke="#444" stroke-width="1.1"/></svg>

<div class="a t16" style="left:878px;top:754.5px;color:#aaa">Подразделение:</div>
<div class="fld" style="left:1009px;top:748px;width:246px;border-color:#d8d8d8"></div>
<div class="a" style="left:1230px;top:749px;width:1px;height:26px;background:#e2e2e2"></div>
<div class="a t16" style="left:1013px;top:754.5px;color:#999">Департамент продаж</div>
<div class="dd" style="left:1240px;top:761px;border-top-color:#aaa"></div>

<div class="a t16" style="left:878px;top:794.5px;color:#444">Поступил:</div>
<div class="fld" style="left:963px;top:788px;width:125px"></div>
<div class="a" style="left:1063.5px;top:789px;width:1px;height:26px;background:#c8c8c8"></div>
<div class="a t16" style="left:967px;top:794.5px;color:#333">21.06.2022</div>
<svg class="a" style="left:1069px;top:794px" width="14" height="14" viewBox="0 0 14 14"><rect x="1" y="2.5" width="12" height="10.5" fill="#fff" stroke="#444" stroke-width="1.3"/><rect x="1" y="2.5" width="12" height="3" fill="#444"/><rect x="3.5" y="0.5" width="1.5" height="3" fill="#444"/><rect x="9" y="0.5" width="1.5" height="3" fill="#444"/><g fill="#444"><rect x="3" y="7" width="2" height="1.5"/><rect x="6" y="7" width="2" height="1.5"/><rect x="9" y="7" width="2" height="1.5"/><rect x="3" y="10" width="2" height="1.5"/><rect x="6" y="10" width="2" height="1.5"/><rect x="9" y="10" width="2" height="1.5"/></g></svg>
<div class="fld" style="left:1096px;top:788px;width:159px"></div>
<div class="a" style="left:1230px;top:789px;width:1px;height:26px;background:#c8c8c8"></div>
<div class="a t16" style="left:1100px;top:794.5px;color:#333">hh.ru</div>
<div class="dd" style="left:1240px;top:801px;border-top-color:#444"></div>

<div class="fld" style="left:1009px;top:828px;width:246px"></div>
<div class="a" style="left:1204px;top:829px;width:1px;height:26px;background:#c8c8c8"></div>
<div class="a" style="left:1230px;top:829px;width:1px;height:26px;background:#c8c8c8"></div>

<!-- bottom clip -->
<div class="a" style="left:0;top:831px;width:1262px;height:11px;background:#fff"></div>
</body></html>
